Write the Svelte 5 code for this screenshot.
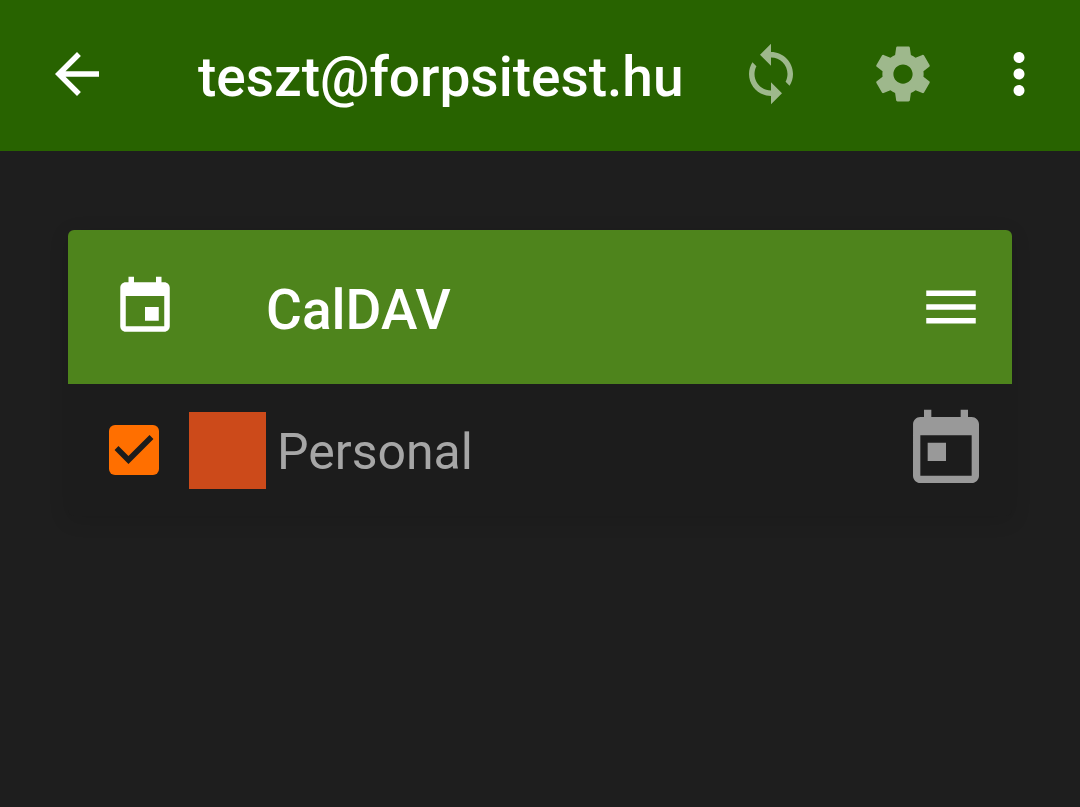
<script>
    let account = "teszt@forpsitest.hu";

    let calendars = [
        { id: "personal", name: "Personal", color: "#cc4a1a", selected: true },
    ];
</script>

<header class="app-bar">
    <button class="back" aria-label="Back">
        <svg class="icon" viewBox="0 0 24 24">
            <path d="M20 11H7.83l5.59-5.59L12 4l-8 8 8 8 1.41-1.41L7.83 13H20v-2z" />
        </svg>
    </button>
    <h1>{account}</h1>
    <button class="action" aria-label="Synchronize">
        <svg class="icon dim" viewBox="0 0 24 24">
            <path
                d="M12 4V1L8 5l4 4V6c3.31 0 6 2.69 6 6 0 1.01-.25 1.97-.7 2.8l1.46 1.46C19.54 15.03 20 13.57 20 12c0-4.42-3.58-8-8-8zm0 14c-3.31 0-6-2.69-6-6 0-1.01.25-1.97.7-2.8L5.24 7.74C4.46 8.97 4 10.43 4 12c0 4.42 3.58 8 8 8v3l4-4-4-4v3z"
            />
        </svg>
    </button>
    <button class="action" aria-label="Settings">
        <svg class="icon dim" viewBox="0 0 24 24">
            <path
                d="M19.43 12.98c.04-.32.07-.64.07-.98s-.03-.66-.07-.98l2.11-1.65c.19-.15.24-.42.12-.64l-2-3.46c-.12-.22-.39-.3-.61-.22l-2.49 1c-.52-.4-1.08-.73-1.69-.98l-.38-2.65C14.46 2.18 14.25 2 14 2h-4c-.25 0-.46.18-.49.42l-.38 2.65c-.61.25-1.17.59-1.69.98l-2.49-1c-.23-.09-.49 0-.61.22l-2 3.46c-.13.22-.07.49.12.64l2.11 1.65c-.04.32-.07.65-.07.98s.03.66.07.98l-2.11 1.65c-.19.15-.24.42-.12.64l2 3.46c.12.22.39.3.61.22l2.49-1c.52.4 1.08.73 1.69.98l.38 2.65c.03.24.24.42.49.42h4c.25 0 .46-.18.49-.42l.38-2.65c.61-.25 1.17-.59 1.69-.98l2.49 1c.23.09.49 0 .61-.22l2-3.46c.12-.22.07-.49-.12-.64l-2.11-1.65zM12 15.5c-1.93 0-3.5-1.57-3.5-3.5s1.57-3.5 3.5-3.5 3.5 1.57 3.5 3.5-1.57 3.5-3.5 3.5z"
            />
        </svg>
    </button>
    <button class="overflow" aria-label="More options">
        <svg class="icon" viewBox="0 0 24 24">
            <path
                d="M12 8c1.1 0 2-.9 2-2s-.9-2-2-2-2 .9-2 2 .9 2 2 2zm0 2c-1.1 0-2 .9-2 2s.9 2 2 2 2-.9 2-2-.9-2-2-2zm0 6c-1.1 0-2 .9-2 2s.9 2 2 2 2-.9 2-2-.9-2-2-2z"
            />
        </svg>
    </button>
</header>

<main>
    <section class="card">
        <div class="card-bar">
            <svg class="icon" viewBox="0 0 24 24">
                <path
                    d="M17 12h-5v5h5v-5zM16 1v2H8V1H6v2H5c-1.11 0-1.99.9-1.99 2L3 19c0 1.1.89 2 2 2h14c1.1 0 2-.9 2-2V5c0-1.1-.9-2-2-2h-1V1h-2zm3 18H5V8h14v11z"
                />
            </svg>
            <h2>CalDAV</h2>
            <button aria-label="CalDAV menu">
                <svg class="icon" viewBox="0 0 24 24">
                    <path d="M3 18h18v-2H3v2zm0-5h18v-2H3v2zm0-7v2h18V6H3z" />
                </svg>
            </button>
        </div>

        <ul>
            {#each calendars as calendar (calendar.id)}
                <li>
                    <span class="check">
                        <input
                            type="checkbox"
                            id={calendar.id}
                            bind:checked={calendar.selected}
                        />
                        <svg viewBox="3 3 18 18">
                            <path d="M10 17l-5-5 1.41-1.41L10 14.17l7.59-7.59L19 8l-9 9z" />
                        </svg>
                    </span>
                    <span class="swatch" style="background: {calendar.color}"></span>
                    <label for={calendar.id}>{calendar.name}</label>
                    <svg class="type" viewBox="0 0 24 24">
                        <path
                            d="M19 3h-1V1h-2v2H8V1H6v2H5c-1.11 0-1.99.9-1.99 2L3 19c0 1.1.89 2 2 2h14c1.1 0 2-.9 2-2V5c0-1.1-.9-2-2-2zm0 16H5V8h14v11zM7 10h5v5H7z"
                        />
                    </svg>
                </li>
            {/each}
        </ul>
    </section>
</main>

<style>
    :global(body) {
        background: #1e1e1e;
        color: #fff;
        font-family: Roboto, "Liberation Sans", sans-serif;
        margin: 0;
    }

    button {
        align-items: center;
        background: none;
        border: none;
        color: inherit;
        cursor: pointer;
        display: flex;
        flex: none;
        justify-content: center;
        padding: 0;
    }

    h1,
    h2 {
        flex: 1;
        font-size: 55px;
        font-weight: 500;
        line-height: 66px;
        margin: 0;
        min-width: 0;
        padding-top: 6px;
        white-space: nowrap;
    }

    .icon {
        display: block;
        fill: currentColor;
        flex: none;
        height: 66px;
        width: 66px;
    }

    .dim {
        opacity: 0.55;
    }

    .app-bar {
        align-items: center;
        background: #286300;
        display: flex;
        padding: 0 11px 3px 0;
    }

    .app-bar button {
        height: 148px;
    }

    .app-bar .back {
        margin-right: 44px;
        width: 154px;
    }

    .app-bar .action {
        width: 132px;
    }

    .app-bar .overflow {
        width: 100px;
    }

    main {
        padding: 79px 68px;
    }

    .card {
        background: #1c1c1c;
        border-radius: 6px;
        box-shadow: 0 4px 20px rgba(0, 0, 0, 0.12);
    }

    .card-bar {
        align-items: center;
        background: #4e841c;
        border-radius: 6px 6px 0 0;
        display: flex;
        padding: 41px 28px 41px 44px;
    }

    .card-bar h2 {
        margin-left: 88px;
    }

    ul {
        list-style: none;
        margin: 0;
        padding: 0;
    }

    li {
        align-items: center;
        display: flex;
        height: 132px;
        padding: 0 22px 0 41px;
    }

    .check {
        display: grid;
        flex: none;
        margin-right: 30px;
    }

    .check input,
    .check svg {
        grid-area: 1 / 1;
        height: 50px;
        width: 50px;
    }

    .check input {
        appearance: none;
        border: 6px solid #a6a6a6;
        border-radius: 6px;
        box-sizing: border-box;
        cursor: pointer;
        margin: 0;
    }

    .check input:checked {
        background: #ff6f00;
        border: none;
    }

    .check svg {
        fill: #1c1c1c;
        pointer-events: none;
    }

    .check input:not(:checked) + svg {
        visibility: hidden;
    }

    .swatch {
        flex: none;
        height: 77px;
        margin-right: 11px;
        width: 77px;
    }

    label {
        color: #a6a6a6;
        flex: 1;
        font-size: 50px;
        line-height: 60px;
        padding-top: 4px;
    }

    .type {
        fill: #999;
        flex: none;
        height: 88px;
        width: 88px;
    }
</style>
